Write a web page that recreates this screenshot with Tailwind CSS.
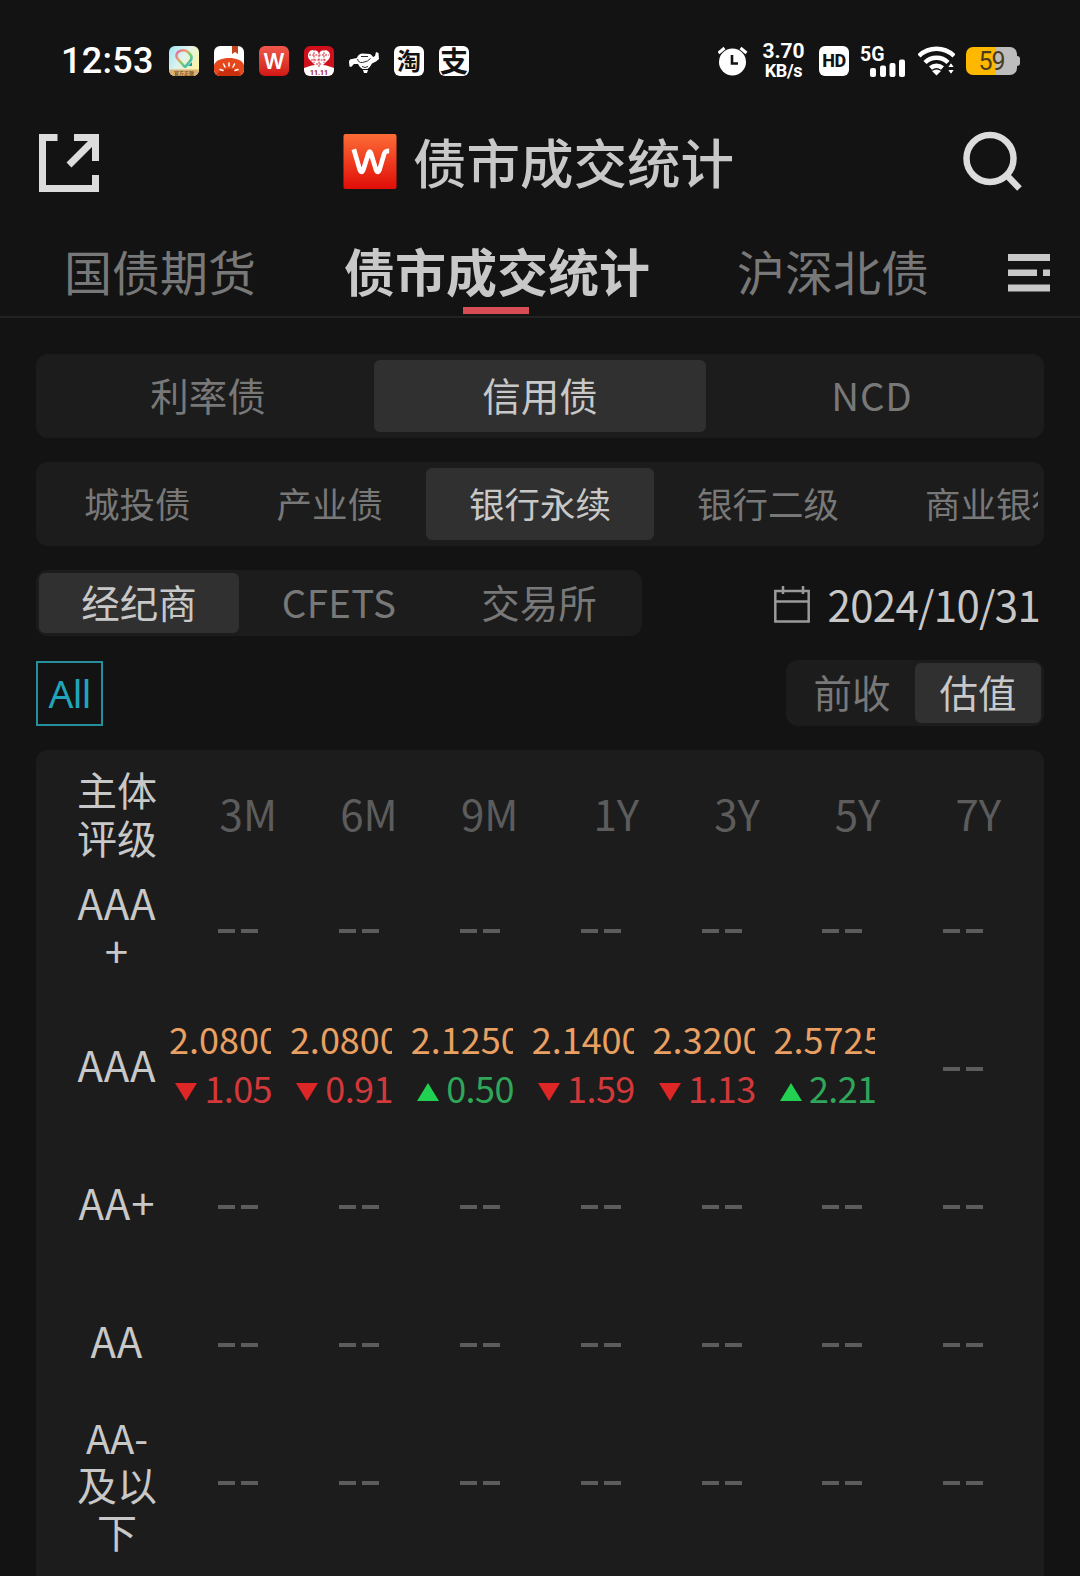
<!DOCTYPE html>
<html lang="zh-CN">
<head>
  <meta charset="UTF-8">
  <meta name="viewport" content="width=device-width, initial-scale=1.0">
  <title>债市成交统计</title>
  <script src="https://cdn.jsdelivr.net/npm/@tailwindcss/browser@4"></script>
</head>
<body class="h-[1576px] overflow-hidden bg-[#131313] font-['Noto_Sans_CJK_SC',sans-serif] text-[#c8c8c8] whitespace-nowrap">
  <!-- Status bar -->
  <div class="flex h-[122px] items-center justify-between pl-[61px] pr-[60px] text-white">
    <div class="flex items-center gap-[15px]">
      <span class="w-[93px] font-[Roboto,sans-serif] text-[36px] font-medium leading-none tracking-[0.3px]">12:53</span>
      <svg class="size-[30px]" viewBox="0 0 30 30">
        <defs>
          <linearGradient id="pastel" x1="0" y1="0" x2="1" y2="0.6"><stop offset="0" stop-color="#9ee6f5"/><stop offset="0.5" stop-color="#dff3ee"/><stop offset="1" stop-color="#fbf3a6"/></linearGradient>
          <linearGradient id="rainbow" x1="0" y1="0" x2="1" y2="1"><stop offset="0" stop-color="#e069b5"/><stop offset="0.35" stop-color="#f0a062"/><stop offset="0.6" stop-color="#6fd26a"/><stop offset="1" stop-color="#2aa5ef"/></linearGradient>
          <clipPath id="tile"><rect width="30" height="30" rx="6"/></clipPath>
        </defs>
        <g clip-path="url(#tile)">
          <rect width="30" height="30" fill="url(#pastel)"/>
          <path d="M15 20 8 12a5 5 0 0 1 3-7 8 8 0 0 1 9 2c3 3 3 6 1 8l-4 5q-1 1-2 0z" fill="none" stroke="url(#rainbow)" stroke-width="2.600"/>
          <path d="M19 20l4-4v4z" fill="#1c9e9a"/>
          <rect y="23.500" width="30" height="7" fill="#dcb274"/>
          <text x="15" y="29" font-size="5" font-weight="bold" text-anchor="middle" fill="#7b5526">官方正版</text>
        </g>
      </svg>
      <svg class="size-[30px]" viewBox="0 0 30 30">
        <g clip-path="url(#tile)">
          <rect width="30" height="30" fill="#fff"/>
          <path d="M18 0h6v8l-3-2-3 2z" fill="#c4431f"/>
          <path d="M0 19C2 14 8 12 15 12s13 2 15 7v11H0z" fill="#e5481d"/>
          <path d="M3 30a12 7 0 0 1 24 0z" fill="#c92f0c"/>
          <path d="M15 17v3M9.500 18l1.500 3M20.500 18 19 21M6 23.500l3 1M24 23.500l-3 1" stroke="#fff" stroke-width="1.500" stroke-linecap="round"/>
        </g>
      </svg>
      <span class="flex size-[30px] items-center justify-center rounded-[6px] bg-linear-to-b from-[#f0574b] to-[#d01512] font-[Inter,sans-serif] text-[21px] font-semibold leading-none">W</span>
      <svg class="size-[30px]" viewBox="0 0 30 30">
        <g clip-path="url(#tile)">
          <rect width="30" height="30" fill="#cf0f1c"/>
          <path d="M0 22q15-7 30 0v8H0z" fill="#fff"/>
          <path d="M15 23 5 13a6 6 0 0 1 1-8c3-2 7-1 9 2 2-3 6-4 9-2a6 6 0 0 1 1 8z" fill="#fff"/>
          <path d="M15 6v15M5 9h20M7 14h16M10 3v14M20 3v14M12 18h6" stroke="#d5202c" stroke-width="1" stroke-dasharray="2 1.200"/>
          <text x="15" y="29" font-family="Roboto" font-size="7" font-weight="bold" text-anchor="middle" fill="#a00d14">11.11</text>
        </g>
      </svg>
      <!-- flying dog -->
      <svg class="size-[30px]" viewBox="0 0 30 30" fill="#fff">
        <path d="M0 16q0-3 3-3l5-1q1-4 5-4.500l8 0.500q2 1 3 3l2-1 1-4 2.500 1 0.500 6-3 2.500-4 2q-2 4-4.500 5.500h-5q-3-1.500-4.500-5l-4 0-3 3-1.500-0.500z"/>
        <path d="M14 24h5l-1 3h-3z"/>
        <path d="M8.500 13q1 4 5 3.500 6-1 8-4M12 10.500h7M13 20.500q3 2 6 0" fill="none" stroke="#131313" stroke-width="0.900"/>
      </svg>
      <span class="flex size-[30px] items-center justify-center rounded-[6px] bg-white pb-[2px] text-[24px] font-bold leading-none text-[#131313]">淘</span>
      <span class="flex size-[30px] items-center justify-center rounded-[6px] bg-white pb-[2px] text-[28px] font-bold leading-none text-[#131313]">支</span>
    </div>
    <div class="flex items-center">
      <svg class="size-[30px]" viewBox="0 0 30 30" fill="none">
        <circle cx="14.500" cy="16" r="13.500" fill="#fff"/>
        <path d="M0.500 7l6-5M28.500 7l-6-5" stroke="#fff" stroke-width="3"/>
        <path d="M14 9v8.500h6" stroke="#131313" stroke-width="2.600"/>
      </svg>
      <div class="ml-[14px] flex w-[43px] flex-col items-center font-[Roboto,sans-serif] font-bold">
        <span class="text-[21px] leading-[19px]">3.70</span>
        <span class="text-[18px] leading-[20px] tracking-[-0.300px]">KB/s</span>
      </div>
      <span class="ml-[14px] flex h-[30px] w-[30px] items-center justify-center rounded-[6px] bg-white font-[Roboto,sans-serif] text-[18px] font-extrabold leading-none tracking-[-0.500px] text-[#131313]">HD</span>
      <svg class="ml-[11px] h-[32px] w-[45px]" viewBox="0 0 45 32" fill="#fff">
        <text x="0" y="15.500" font-family="Roboto" font-size="19.500" font-weight="700">5G</text>
        <rect x="10" y="23" width="6" height="9" rx="2"/><rect x="20" y="20.500" width="6" height="11.500" rx="2"/><rect x="29.500" y="18" width="6" height="14" rx="2"/><rect x="39" y="14.500" width="6" height="17.500" rx="2"/>
      </svg>
      <svg class="ml-[13px] h-[30px] w-[37px]" viewBox="0 0 37 30" fill="none" stroke="#fff" stroke-width="4.500">
        <path d="M1 10a25 25 0 0 1 35 0M7 16.500a16.500 16.500 0 0 1 23 0M12.500 22a9 9 0 0 1 12 0"/>
        <path d="M14 25q4.500-3 9 0l-4.500 4.500z" fill="#fff" stroke="none"/>
        <path d="M29.500 21.500l3.500-5 3.500 5zM29.500 23.500l3.500 5 3.500-5z" fill="#fff" stroke="#131313" stroke-width="1"/>
      </svg>
      <div class="ml-[11px] flex items-center">
        <span class="flex h-[28px] w-[51px] items-center justify-center rounded-[7px] bg-linear-to-r from-[#ffb800] from-58% to-[#bdbdbd] to-58% font-[Roboto,sans-serif] text-[25px] leading-none tracking-[-1px] text-[#4a3c1a]">59</span>
        <span class="h-[10px] w-[3px] rounded-r-[3px] bg-[#bdbdbd]"></span>
      </div>
    </div>
  </div>

  <!-- Title -->
  <header class="flex h-[78px] items-center justify-between pl-[39px] pr-[57px]">
    <svg class="mt-[3px] h-[58px] w-[60px]" viewBox="0 0 60 58" fill="none" stroke="#dcdcdc" stroke-width="7">
      <path d="M18.500 3.500h-15v51h53V41M35 3.500h21.500V27M30 31 56 5"/>
    </svg>
    <div class="ml-[17px] flex items-center">
      <svg class="h-[55px] w-[54px]" viewBox="0 0 54 56">
        <defs><linearGradient id="brand" x1="0" y1="0" x2="0" y2="1"><stop offset="0" stop-color="#fd6c36"/><stop offset="1" stop-color="#e00d08"/></linearGradient></defs>
        <rect width="54" height="56" rx="2" fill="url(#brand)"/>
        <path d="M10.500 15.500 16.500 36q1.900 5 3.800 0L25.500 19.500q1.200-3 2.400 0L33 36q1.900 5 3.800 0L41.500 20q1.200-2.800 5-2.800" fill="none" stroke="#fff" stroke-width="4.800"/>
      </svg>
      <h1 class="ml-[16px] text-[53.5px] font-medium leading-[72px] -mt-[1px]">债市成交统计</h1>
    </div>
    <svg class="size-[62px]" viewBox="0 0 62 62" fill="none" stroke="#dcdcdc" stroke-width="6.500">
      <circle cx="29" cy="28.500" r="23.500"/><path d="M45.500 45l13 13.500"/>
    </svg>
  </header>

  <!-- Tabs -->
  <nav class="flex h-[118px] border-b-2 border-[#222] pl-[64px] text-[48px] leading-[72px] text-[#787878]">
    <a class="mt-[34px] w-[280px]">国债期货</a>
    <div class="flex w-[306px] flex-col items-center">
      <a class="mt-[34px] text-[51px] font-bold leading-[72px] text-[#c8c8c8]">债市成交统计</a>
      <span class="mt-[1px] mr-[2px] h-[7px] w-[66px] bg-[#d84c53]"></span>
    </div>
    <a class="mt-[34px] ml-[87px]">沪深北债</a>
    <svg class="mt-[54px] mr-[30px] ml-auto h-[38px] w-[42px]" viewBox="0 0 42 38" fill="#c8c8c8">
      <path d="M0 0h42v7H0zM0 15.500h29v6.500H0zM35 15.500h7v6.500h-7zM0 30.500h42v7H0z"/>
    </svg>
  </nav>

  <main class="px-[36px] pt-[36px]">
    <!-- Bond type -->
    <div class="grid h-[84px] grid-cols-3 rounded-[12px] bg-[#1c1c1c] p-[6px] text-center text-[38.5px] leading-[68px] text-[#787878]">
      <a>利率债</a>
      <a class="rounded-[6px] bg-[#303030] text-[#c8c8c8]">信用债</a>
      <a class="tracking-[0.800px]">NCD</a>
    </div>
    <div class="mt-[24px] h-[84px] rounded-[12px] bg-[#1c1c1c] p-[6px]">
      <div class="flex overflow-hidden text-[35.5px] leading-[70px] text-[#787878]">
        <a class="shrink-0 pr-[43px] pl-[42px]">城投债</a>
        <a class="shrink-0 px-[43px]">产业债</a>
        <a class="h-[72px] shrink-0 rounded-[6px] bg-[#303030] px-[43px] text-[#c8c8c8]">银行永续</a>
        <a class="shrink-0 px-[43px]">银行二级</a>
        <a class="shrink-0 px-[43px]">商业银行</a>
      </div>
    </div>
    <!-- Source and date -->
    <div class="mt-[24px] flex h-[66px] items-center justify-between">
      <div class="grid h-[66px] w-[606px] grid-cols-3 rounded-[12px] bg-[#1c1c1c] p-[3px] text-center text-[38.5px] leading-[57px] text-[#787878]">
        <a class="rounded-[6px] bg-[#303030] text-[#c8c8c8]">经纪商</a>
        <a class="tracking-[0.300px]">CFETS</a>
        <a>交易所</a>
      </div>
      <div class="flex items-center gap-[18px] pr-[4px]">
        <svg class="mt-[3px] h-[37px] w-[36px]" viewBox="0 0 36 37" fill="none" stroke="#9a9a9a" stroke-width="2.500">
          <path d="M1.300 5h33.400v30.500H1.300zM1.300 15.500h33.400M9 0v8M29 0v8"/>
        </svg>
        <span class="mt-[2px] text-[42px] leading-[58px] tracking-[-0.700px]">2024/10/31</span>
      </div>
    </div>
    <!-- Filter -->
    <div class="mt-[24px] flex h-[66px] items-center justify-between">
      <a class="h-[65px] w-[67px] border-2 border-[#268f9e] text-center font-['Noto_Sans',sans-serif] text-[39px] leading-[60px] tracking-[-1px] text-[#20a5ba]">All</a>
      <div class="flex h-[66px] w-[258px] rounded-[12px] bg-[#1c1c1c] p-[3px] text-center text-[38.5px] leading-[57px] text-[#787878]">
        <a class="flex-1">前收</a>
        <a class="w-[126px] rounded-[6px] bg-[#303030] text-[#c8c8c8]">估值</a>
      </div>
    </div>
    <!-- Table -->
    <section class="mt-[24px] h-[840px] rounded-t-[12px] bg-[#1c1c1c]">
      <div class="flex h-[110px] items-center pt-[16px]">
        <div class="ml-[36px] w-[90px] text-center text-[40px] leading-[48px]">主体<br>评级</div>
        <div id="terms" class="ml-[8px] grid grid-cols-[repeat(7,120.7px)] text-[42px] leading-[48px] text-[#5c5c5c]"></div>
      </div>
      <div id="rows"></div>
    </section>
  </main>

  <script>
    var terms = ['3M', '6M', '9M', '1Y', '3Y', '5Y', '7Y'];
    var rows = [
      ['AAA<br>+', []],
      ['AAA', [['2.0800', -1.05], ['2.0800', -0.91], ['2.1250', 0.50], ['2.1400', -1.59], ['2.3200', -1.13], ['2.5725', 2.21]]],
      ['AA+', []],
      ['AA', []],
      ['AA-<br>及以<br>下', []]
    ];

    // no trade: two dashes
    var empty = '<div class="flex w-[102px] justify-end gap-[6px] pr-[13px] pt-[4px]"><i class="h-[4px] w-[17px] bg-[#5c5c5c]"></i><i class="h-[4px] w-[17px] bg-[#5c5c5c]"></i></div>';

    function cell(c) {
      if (!c) return empty;
      var up = c[1] > 0;
      var color = up ? 'text-[#2fa659]' : 'text-[#d2383a]';
      var arrow = up ? '<path d="M0 18 11 0 22 18z" fill="#22d152"/>' : '<path d="M0 0h22L11 18z" fill="#de2626"/>';
      return '<div class="w-[102px] pb-[8px] text-[36px] leading-[49px]">' +
        '<div class="overflow-hidden text-[#e9a062]">' + c[0] + '</div>' +
        '<div class="-mr-[1px] flex items-center justify-end ' + color + '"><svg class="mr-[7px] mt-[9px] h-[18px] w-[22px]" viewBox="0 0 22 18">' + arrow + '</svg>' +
        '<span class="tracking-[-0.600px]">' + Math.abs(c[1]).toFixed(2) + '</span></div></div>';
    }

    document.getElementById('terms').innerHTML = terms.map(function (t) {
      return '<span class="w-[107px] text-right">' + t + '</span>';
    }).join('');

    document.getElementById('rows').innerHTML = rows.map(function (r, n) {
      var cells = terms.map(function (t, i) { return cell(r[1][i]); }).join('');
      // the three-line label sits lower and is set a little tighter
      var label = n === 4 ? 'pt-[7px] text-[40px] leading-[47px]' : 'pb-[7px] text-[42px] leading-[47.5px] tracking-[1px]';
      return '<div class="flex h-[138px] items-center">' +
        '<div class="ml-[36px] w-[90px] text-center ' + label + '">' + r[0] + '</div>' +
        '<div class="ml-[7px] grid grid-cols-[repeat(7,120.9px)] items-center">' + cells + '</div></div>';
    }).join('');
  </script>
</body>
</html>
